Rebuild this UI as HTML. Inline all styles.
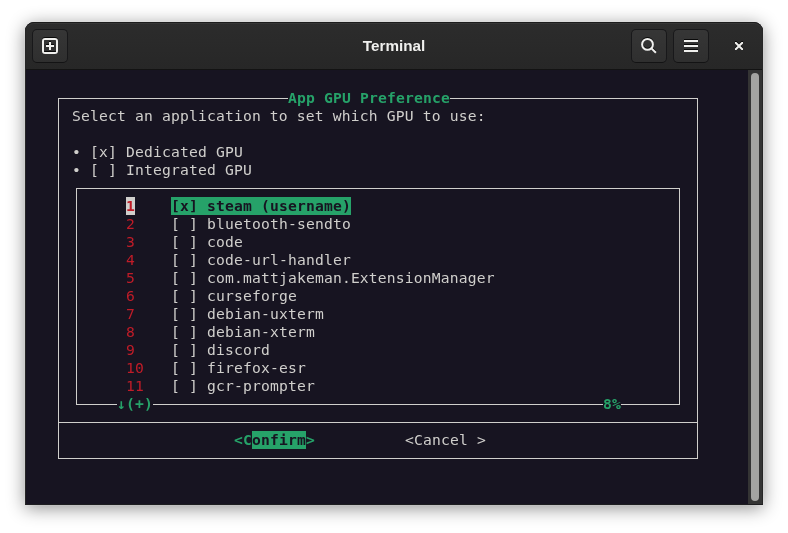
<!DOCTYPE html>
<html lang="en">
<head>
<meta charset="utf-8">
<title>Terminal</title>
<style>
html,body{margin:0;padding:0}
body{width:788px;height:533px;background:#fff;position:relative;overflow:hidden;font-family:"Liberation Sans",sans-serif}
#win{position:absolute;left:25px;top:22px;width:738px;height:483px;border-radius:9px 9px 0 0;background:#171421;
 box-shadow:0 0 0 1px rgba(255,255,255,.1),0 3px 18px rgba(0,0,0,.45)}
#win::after{content:"";position:absolute;left:0;top:0;right:0;bottom:0;border:1px solid #262626;border-top-color:#1c1c1c;border-bottom-color:#1d1d20;border-radius:9px 9px 0 0;pointer-events:none}
#hb{position:absolute;left:0;top:0;width:738px;height:47px;border-radius:9px 9px 0 0;background:linear-gradient(#2c2c2c,#272727);
 box-shadow:inset 0 2px rgba(255,255,255,.05);border-bottom:1px solid #131313;box-sizing:content-box}
#title{will-change:transform;position:absolute;left:0;width:738px;top:14px;height:20px;line-height:20px;text-align:center;color:#f0f0ee;font-weight:bold;font-size:15.25px}
.btn{position:absolute;top:7px;width:34px;height:32px;border:1px solid #18181a;border-bottom-color:#131314;border-radius:5px;background:linear-gradient(#363636,#2f2f2f)}
.btn svg{position:absolute;left:9px;top:8px;filter:drop-shadow(0 -1px 0 rgba(0,0,0,.8))}
#term{position:absolute;left:0;top:0;width:788px;height:533px;will-change:transform}
.t{position:absolute;height:18px;line-height:18px;font-family:"DejaVu Sans Mono","Liberation Mono",monospace;font-size:14.667px;letter-spacing:0.17px;color:#d0cfcc;white-space:pre}
.b{font-weight:bold}
.g{color:#26a269}
.r{color:#c01c28}
.sel{background:#26a269;color:#171421}
.inv{background:#d0cfcc}
.ln{position:absolute;background:#d0cfcc;display:block}
#sb{position:absolute;left:723px;top:48px;width:15px;height:435px;background:#343434}
#th{position:absolute;left:726px;top:51px;width:8px;height:428px;border-radius:4px;background:#a4a4a2}
</style>
</head>
<body>
<div id="win">
 <div id="hb">
  <div class="btn" style="left:7px"><svg width="16" height="16" viewBox="0 0 16 16"><path fill="#f0f0ee" fill-rule="evenodd" d="M3.2 0h9.6A3.2 3.2 0 0 1 16 3.2v9.6a3.2 3.2 0 0 1-3.2 3.2H3.2A3.2 3.2 0 0 1 0 12.8V3.2A3.2 3.2 0 0 1 3.2 0zM2.6 2h10.8a.6.6 0 0 1 .6.6v10.8a.6.6 0 0 1-.6.6H2.6a.6.6 0 0 1-.6-.6V2.6a.6.6 0 0 1 .6-.6z"/><path d="M8 4v8M4 8h8" stroke="#f0f0ee" stroke-width="2"/></svg></div>
  <div id="title">Terminal</div>
  <div class="btn" style="left:606px"><svg width="16" height="16" viewBox="0 0 16 16"><circle cx="6.5" cy="6.4" r="5.4" fill="none" stroke="#f0f0ee" stroke-width="2"/><path d="M10.2 10.1l4.7 4.7" stroke="#f0f0ee" stroke-width="2"/></svg></div>
  <div class="btn" style="left:648px"><svg width="16" height="16" viewBox="0 0 16 16"><path d="M1 3h14M1 8h14M1 13h14" stroke="#f0f0ee" stroke-width="2"/></svg></div>
  <svg style="position:absolute;left:706px;top:16px;filter:drop-shadow(0 -1px 0 rgba(0,0,0,.8))" width="16" height="16" viewBox="0 0 16 16"><path d="M4 4h1.4L8 6.6 10.6 4H12v1.4L9.4 8 12 10.6V12h-1.4L8 9.4 5.4 12H4v-1.4L6.6 8 4 5.4z" fill="#f0f0ee"/></svg>
 </div>
 <div id="sb"></div><div id="th"></div>
</div>
<div id="term">
<i class="ln" style="left:58px;top:98px;width:230px;height:1px"></i>
<i class="ln" style="left:450px;top:98px;width:248px;height:1px"></i>
<i class="ln" style="left:58px;top:422px;width:640px;height:1px"></i>
<i class="ln" style="left:58px;top:458px;width:640px;height:1px"></i>
<i class="ln" style="left:58px;top:98px;width:1px;height:361px"></i>
<i class="ln" style="left:697px;top:98px;width:1px;height:361px"></i>
<i class="ln" style="left:76px;top:188px;width:604px;height:1px"></i>
<i class="ln" style="left:76px;top:404px;width:41px;height:1px"></i>
<i class="ln" style="left:153px;top:404px;width:450px;height:1px"></i>
<i class="ln" style="left:621px;top:404px;width:59px;height:1px"></i>
<i class="ln" style="left:76px;top:188px;width:1px;height:217px"></i>
<i class="ln" style="left:679px;top:188px;width:1px;height:217px"></i>
<span class="t g b" style="left:288px;top:89px;width:162px">App GPU Preference</span>
<span class="t " style="left:72px;top:107px;width:414px">Select an application to set which GPU to use:</span>
<span class="t " style="left:72px;top:143px;width:171px">• [x] Dedicated GPU</span>
<span class="t " style="left:72px;top:161px;width:180px">• [ ] Integrated GPU</span>
<span class="t r b inv" style="left:126px;top:197px;width:9px">1</span>
<span class="t sel b" style="left:171px;top:197px;width:180px">[x] steam (username)</span>
<span class="t r" style="left:126px;top:215px;width:9px">2</span>
<span class="t " style="left:171px;top:215px;width:180px">[ ] bluetooth-sendto</span>
<span class="t r" style="left:126px;top:233px;width:9px">3</span>
<span class="t " style="left:171px;top:233px;width:72px">[ ] code</span>
<span class="t r" style="left:126px;top:251px;width:9px">4</span>
<span class="t " style="left:171px;top:251px;width:180px">[ ] code-url-handler</span>
<span class="t r" style="left:126px;top:269px;width:9px">5</span>
<span class="t " style="left:171px;top:269px;width:324px">[ ] com.mattjakeman.ExtensionManager</span>
<span class="t r" style="left:126px;top:287px;width:9px">6</span>
<span class="t " style="left:171px;top:287px;width:126px">[ ] curseforge</span>
<span class="t r" style="left:126px;top:305px;width:9px">7</span>
<span class="t " style="left:171px;top:305px;width:153px">[ ] debian-uxterm</span>
<span class="t r" style="left:126px;top:323px;width:9px">8</span>
<span class="t " style="left:171px;top:323px;width:144px">[ ] debian-xterm</span>
<span class="t r" style="left:126px;top:341px;width:9px">9</span>
<span class="t " style="left:171px;top:341px;width:99px">[ ] discord</span>
<span class="t r" style="left:126px;top:359px;width:18px">10</span>
<span class="t " style="left:171px;top:359px;width:135px">[ ] firefox-esr</span>
<span class="t r" style="left:126px;top:377px;width:18px">11</span>
<span class="t " style="left:171px;top:377px;width:144px">[ ] gcr-prompter</span>
<span class="t g b" style="left:117px;top:395px;width:36px">↓(+)</span>
<span class="t g b" style="left:603px;top:395px;width:18px">8%</span>
<span class="t g b" style="left:234px;top:431px;width:18px">&lt;C</span>
<span class="t sel b" style="left:252px;top:431px;width:54px">onfirm</span>
<span class="t g b" style="left:306px;top:431px;width:9px">&gt;</span>
<span class="t " style="left:405px;top:431px;width:81px">&lt;Cancel &gt;</span>
</div>
</body>
</html>
